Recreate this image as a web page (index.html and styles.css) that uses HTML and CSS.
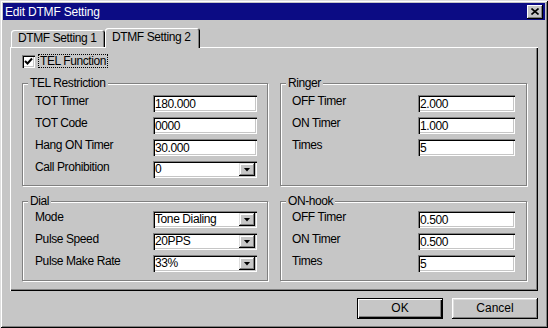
FILE: index.html
```html
<!DOCTYPE html>
<html lang="en">
  <head>
    <meta charset="UTF-8" />
    <meta name="viewport" content="width=device-width, initial-scale=1.0" />
    <title>Edit DTMF Setting</title>
    <link rel="stylesheet" href="styles.css">
  </head>
  <body>
    <div class="window">
      <div class="titlebar">
        <span class="title">Edit DTMF Setting</span>
        <button class="close">
          <svg width="8" height="7" viewBox="0 0 8 7"><path d="M0.5 0.5 L7.5 6.5 M7.5 0.5 L0.5 6.5" stroke="#000" stroke-width="1.6" fill="none" /></svg>
        </button>
      </div>

      <div class="tabs">
        <div class="tab">DTMF Setting 1</div>
        <div class="tab active">DTMF Setting 2</div>
      </div>

      <div class="panel">
        <label class="check">
          <span class="box"><svg width="9" height="9" viewBox="0 0 9 9"><path d="M1 4 L3.5 6.5 L8 1.5" stroke="#000" stroke-width="2" fill="none" /></svg></span>
          <span class="focus">TEL Function</span>
        </label>

        <div class="groups">
          <!-- TEL Restriction -->
          <div class="group left top">
            <div class="group-title">TEL Restriction</div>
            <div class="rows">
              <div class="row"><span class="label">TOT Timer</span><input class="field" type="text" value="180.000" /></div>
              <div class="row"><span class="label">TOT Code</span><input class="field" type="text" value="0000" /></div>
              <div class="row"><span class="label">Hang ON Timer</span><input class="field" type="text" value="30.000" /></div>
              <div class="row"><span class="label">Call Prohibition</span><div class="field combo"><span class="value">0</span><span class="drop"></span></div></div>
            </div>
          </div>

          <!-- Ringer -->
          <div class="group right top">
            <div class="group-title">Ringer</div>
            <div class="rows">
              <div class="row"><span class="label">OFF Timer</span><input class="field" type="text" value="2.000" /></div>
              <div class="row"><span class="label">ON Timer</span><input class="field" type="text" value="1.000" /></div>
              <div class="row"><span class="label">Times</span><input class="field" type="text" value="5" /></div>
            </div>
          </div>

          <!-- Dial -->
          <div class="group left bottom">
            <div class="group-title">Dial</div>
            <div class="rows">
              <div class="row"><span class="label">Mode</span><div class="field combo"><span class="value">Tone Dialing</span><span class="drop"></span></div></div>
              <div class="row"><span class="label">Pulse Speed</span><div class="field combo"><span class="value">20PPS</span><span class="drop"></span></div></div>
              <div class="row"><span class="label">Pulse Make Rate</span><div class="field combo"><span class="value">33%</span><span class="drop"></span></div></div>
            </div>
          </div>

          <!-- ON-hook -->
          <div class="group right bottom">
            <div class="group-title">ON-hook</div>
            <div class="rows">
              <div class="row"><span class="label">OFF Timer</span><input class="field" type="text" value="0.500" /></div>
              <div class="row"><span class="label">ON Timer</span><input class="field" type="text" value="0.500" /></div>
              <div class="row"><span class="label">Times</span><input class="field" type="text" value="5" /></div>
            </div>
          </div>
        </div>
      </div>

      <div class="buttons">
        <button class="btn default">OK</button>
        <button class="btn">Cancel</button>
      </div>
    </div>
  </body>
</html>
```

FILE: styles.css
```css
body {
  margin: 0;
  background: #c6c6c6;
  color: #000;
  font-family: "Liberation Sans", Arial, sans-serif;
  font-size: 12px;
  letter-spacing: -0.4px;
}
.window {
  box-sizing: border-box;
  width: 548px;
  height: 328px;
  padding: 3px;
  background: #c6c6c6;
  box-shadow: inset 1px 1px #dedede, inset -1px -1px #000, inset 2px 2px #fff,
    inset -2px -2px #808080;
}

/* Title bar */
.titlebar {
  display: flex;
  align-items: center;
  justify-content: space-between;
  height: 17px;
  padding-left: 2px;
  background: #0c0c84;
  color: #fff;
  letter-spacing: -0.2px;
}
.close {
  display: flex;
  align-items: center;
  justify-content: center;
  width: 16px;
  height: 14px;
  margin-right: 2px;
  padding: 0;
  border: 0;
  background: #c6c6c6;
  box-shadow: inset -1px -1px #000, inset 1px 1px #fff, inset -2px -2px #808080;
}

/* Tabs */
.tabs {
  display: flex;
  align-items: flex-end;
  height: 19px;
  margin-top: 8px;
  padding-left: 8px;
}
.tab {
  box-sizing: border-box;
  width: 94px;
  height: 17px;
  padding-left: 7px;
  line-height: 17px;
  border-radius: 3px 3px 0 0;
  box-shadow: inset 1px 1px #fff, inset -1px 0 #000, inset -2px 0 #808080;
}
.tab.active {
  position: relative;
  z-index: 1;
  width: 95px;
  height: 20px;
  margin-bottom: -1px;
  padding-left: 7px;
  line-height: 18px;
  background: #c6c6c6;
}

/* Panel */
.panel {
  margin: 0 7px;
  padding: 7px 11px 10px 12px;
  box-shadow: inset 1px 1px #fff, inset -1px -1px #000, inset -2px -2px #808080;
}
.check {
  display: flex;
  align-items: flex-start;
}
.box {
  display: flex;
  align-items: center;
  justify-content: center;
  width: 13px;
  height: 13px;
  margin-top: 1px;
  background: #fff;
  box-shadow: inset 1px 1px #808080, inset 2px 2px #000, inset -1px -1px #fff,
    inset -2px -2px #c6c6c6;
}
.focus {
  margin-left: 3px;
  padding: 0 1px;
  line-height: 12px;
  border: 1px dotted #000;
}

/* Groups */
.groups {
  display: grid;
  grid-template-columns: 246px 247px;
  column-gap: 12px;
  row-gap: 15px;
  margin-top: 15px;
}
.group {
  border: 1px solid #808080;
  box-shadow: inset 1px 1px #fff, 1px 1px #fff;
}
.group-title {
  width: fit-content;
  margin: -8px 0 -6px 5px;
  padding: 0 2px;
  line-height: 14px;
  background: #c6c6c6;
}
.rows {
  display: flex;
  flex-direction: column;
  gap: 5px;
}
.top .rows {
  padding-top: 11px;
  padding-bottom: 7px;
}
.bottom .rows {
  padding-top: 9px;
  padding-bottom: 8px;
}
.left .rows {
  padding-left: 12px;
  padding-right: 10px;
}
.right .rows {
  padding-left: 11px;
  padding-right: 11px;
}
.row {
  display: flex;
  align-items: flex-start;
  justify-content: space-between;
  height: 17px;
}
.label {
  line-height: 13px;
}

/* Fields */
.field {
  box-sizing: border-box;
  width: 104px;
  height: 17px;
  margin: 0;
  padding: 0 2px;
  border: 0;
  outline: none;
  background: #fff;
  color: #000;
  font: inherit;
  letter-spacing: inherit;
  box-shadow: inset 1px 1px #808080, inset 2px 2px #000, inset -1px -1px #fff,
    inset -2px -2px #c6c6c6;
}
.right .field {
  width: 97px;
}
.combo {
  display: flex;
  padding: 2px;
}
.combo .value {
  flex: 1;
  line-height: 13px;
}
.drop {
  display: flex;
  align-items: center;
  justify-content: center;
  width: 16px;
  height: 13px;
  background: #c6c6c6;
  box-shadow: inset -1px -1px #000, inset 1px 1px #dedede, inset -2px -2px #808080,
    inset 2px 2px #fff;
}
.drop::after {
  content: "";
  width: 7px;
  height: 4px;
  background: #000;
  clip-path: polygon(0 0, 100% 0, 50% 100%);
}

/* Buttons */
.buttons {
  display: flex;
  justify-content: flex-end;
  gap: 9px;
  margin-top: 7px;
  padding-right: 7px;
}
.btn {
  width: 86px;
  height: 21px;
  padding: 0 0 2px;
  border: 0;
  background: #c6c6c6;
  color: #000;
  font: inherit;
  letter-spacing: 0;
  box-shadow: inset -1px -1px #000, inset 1px 1px #fff, inset -2px -2px #808080,
    inset 2px 2px #dedede;
}
.btn.default {
  box-shadow: inset 0 0 0 1px #000, inset 2px 2px #fff, inset -2px -2px #000,
    inset -3px -3px #808080;
}
```
